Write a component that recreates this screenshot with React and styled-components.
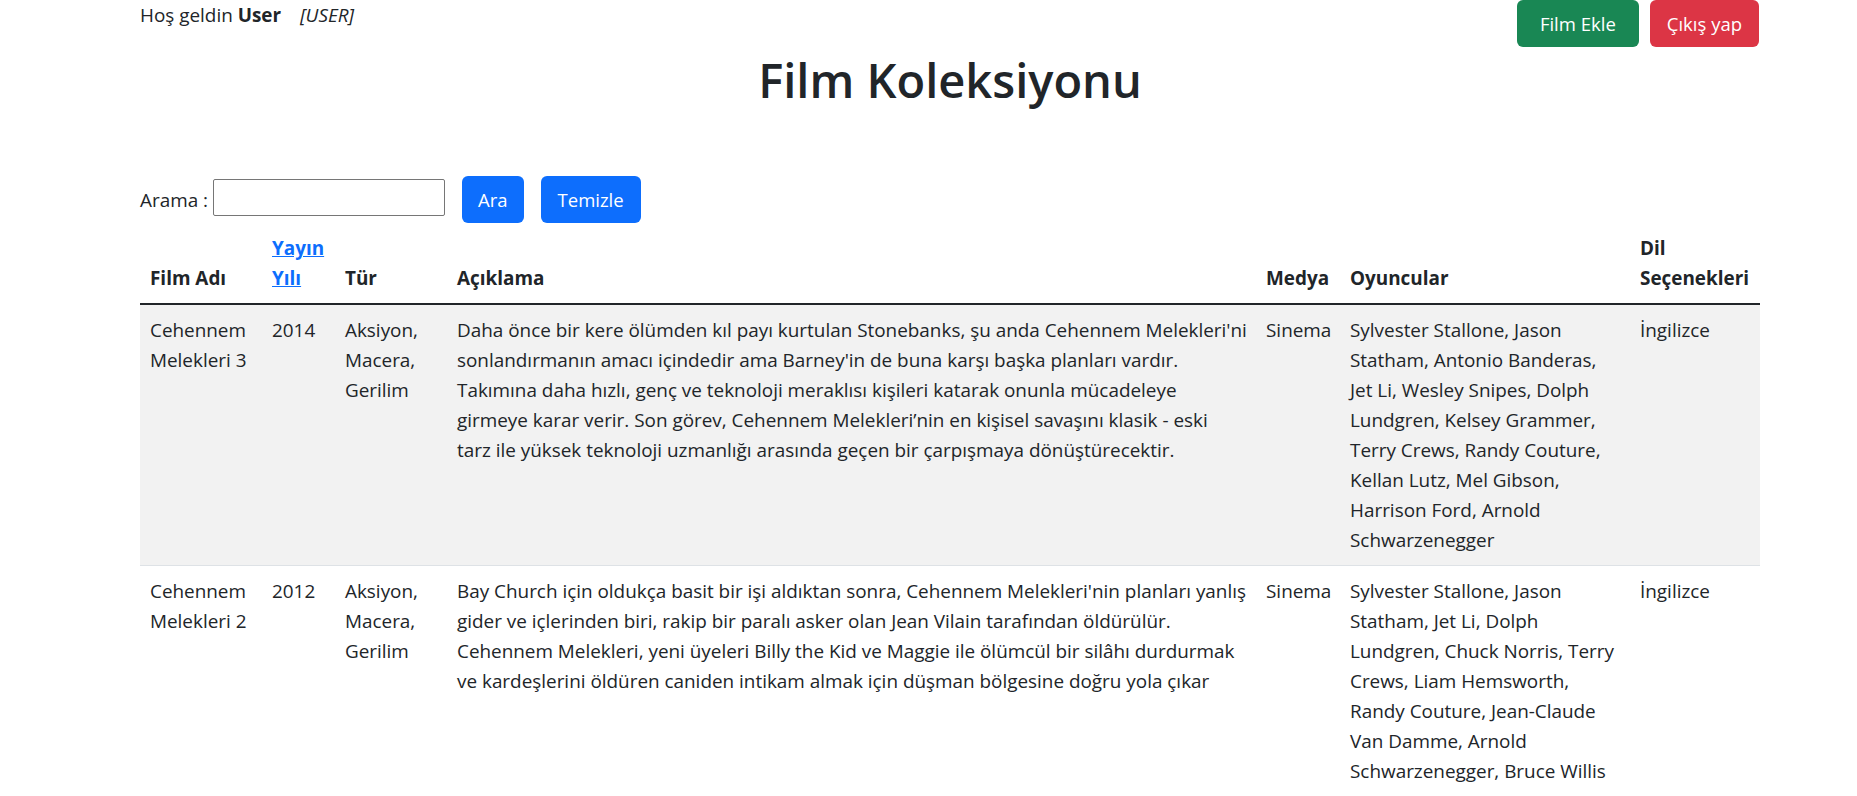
import styled, { createGlobalStyle } from "styled-components";

const GlobalStyle = createGlobalStyle`
  body {
    margin: 0;
    background: #fff;
    color: #212529;
    font-family: "Open Sans", "Noto Sans", sans-serif;
    font-size: 18.9px;
    line-height: 30px;
  }
`;

// description lines are kept as they break in the design
const films = [
  {
    name: "Cehennem Melekleri 3",
    year: "2014",
    genre: "Aksiyon, Macera, Gerilim",
    desc: [
      "Daha önce bir kere ölümden kıl payı kurtulan Stonebanks, şu anda Cehennem Melekleri'ni",
      "sonlandırmanın amacı içindedir ama Barney'in de buna karşı başka planları vardır.",
      "Takımına daha hızlı, genç ve teknoloji meraklısı kişileri katarak onunla mücadeleye",
      "girmeye karar verir. Son görev, Cehennem Melekleri’nin en kişisel savaşını klasik - eski",
      "tarz ile yüksek teknoloji uzmanlığı arasında geçen bir çarpışmaya dönüştürecektir.",
    ],
    media: "Sinema",
    cast: "Sylvester Stallone, Jason Statham, Antonio Banderas, Jet Li, Wesley Snipes, Dolph Lundgren, Kelsey Grammer, Terry Crews, Randy Couture, Kellan Lutz, Mel Gibson, Harrison Ford, Arnold Schwarzenegger",
    lang: "İngilizce",
  },
  {
    name: "Cehennem Melekleri 2",
    year: "2012",
    genre: "Aksiyon, Macera, Gerilim",
    desc: [
      "Bay Church için oldukça basit bir işi aldıktan sonra, Cehennem Melekleri'nin planları yanlış",
      "gider ve içlerinden biri, rakip bir paralı asker olan Jean Vilain tarafından öldürülür.",
      "Cehennem Melekleri, yeni üyeleri Billy the Kid ve Maggie ile ölümcül bir silâhı durdurmak",
      "ve kardeşlerini öldüren caniden intikam almak için düşman bölgesine doğru yola çıkar",
    ],
    media: "Sinema",
    cast: "Sylvester Stallone, Jason Statham, Jet Li, Dolph Lundgren, Chuck Norris, Terry Crews, Liam Hemsworth, Randy Couture, Jean-Claude Van Damme, Arnold Schwarzenegger, Bruce Willis",
    lang: "İngilizce",
  },
];

const columns = [122, 73, 112, 809, 84, 290, 130];

const App = () => {
  return (
    <Container>
      <GlobalStyle />
      <TopBar>
        <Welcome>
          Hoş geldin <b>User</b>
          <Role>[USER]</Role>
        </Welcome>
        <Actions>
          <Button $color="#198754" $pad="23px">Film Ekle</Button>
          <Button $color="#dc3545" $pad="17px">Çıkış yap</Button>
        </Actions>
      </TopBar>
      <Title>Film Koleksiyonu</Title>
      <SearchRow>
        <label>
          Arama : <SearchInput type="text" />
        </label>
        <Button $color="#0d6efd" $pad="16px">Ara</Button>
        <Button $color="#0d6efd" $pad="17px">Temizle</Button>
      </SearchRow>
      <Table>
        <colgroup>
          {columns.map((w, i) => (
            <col key={i} style={{ width: w }} />
          ))}
        </colgroup>
        <thead>
          <tr>
            <th>Film Adı</th>
            <th>
              <SortLink href="#">Yayın Yılı</SortLink>
            </th>
            <th>Tür</th>
            <th>Açıklama</th>
            <th>Medya</th>
            <th>Oyuncular</th>
            <th>Dil Seçenekleri</th>
          </tr>
        </thead>
        <tbody>
          {films.map((f, i) => (
            <Row key={i} $striped={i % 2 === 0}>
              <td>{f.name}</td>
              <td>{f.year}</td>
              <td>{f.genre}</td>
              <td>
                {f.desc.map((line, j) => (
                  <DescLine key={j}>{line}</DescLine>
                ))}
              </td>
              <td>{f.media}</td>
              <td>{f.cast}</td>
              <td>{f.lang}</td>
            </Row>
          ))}
        </tbody>
      </Table>
    </Container>
  );
};

export default App;

const Container = styled.div`
  width: 1620px;
  margin-left: 140px;
`;

const TopBar = styled.div`
  display: flex;
  justify-content: space-between;
  align-items: flex-start;
  height: 47px;
`;

const Welcome = styled.div`
  line-height: 30px;
  b {
    font-weight: 700;
  }
`;

const Role = styled.i`
  margin-left: 19px;
`;

const Actions = styled.div`
  display: flex;
  gap: 11px;
  padding-right: 1px;
`;

const Button = styled.button`
  height: 47px;
  padding: 0 ${(p) => p.$pad};
  border: none;
  border-radius: 6px;
  background: ${(p) => p.$color};
  color: #fff;
  font-family: inherit;
  font-size: 18.5px;
  cursor: pointer;
`;

const Title = styled.h1`
  margin: 3px 0 0;
  text-align: center;
  font-size: 47px;
  font-weight: 600;
  line-height: 60px;
`;

const SearchRow = styled.div`
  display: flex;
  align-items: center;
  gap: 17px;
  margin-top: 66px;
  label {
    display: flex;
    align-items: center;
    gap: 5px;
  }
`;

const SearchInput = styled.input`
  width: 232px;
  height: 37px;
  box-sizing: border-box;
  margin-top: -4px;
  border: 1px solid #767676;
  border-radius: 2px;
  font-family: inherit;
  font-size: 18px;
`;

const Table = styled.table`
  width: 1620px;
  table-layout: fixed;
  border-collapse: collapse;
  th,
  td {
    padding: 10px;
    text-align: left;
  }
  thead th {
    vertical-align: bottom;
    font-weight: 700;
    border-bottom: 2px solid #212529;
  }
  tbody td {
    vertical-align: top;
    border-bottom: 1px solid #dee2e6;
  }
`;

const Row = styled.tr`
  background: ${(p) => (p.$striped ? "#f2f2f2" : "#fff")};
`;

const DescLine = styled.span`
  display: block;
  white-space: nowrap;
`;

const SortLink = styled.a`
  color: #0d6efd;
  text-decoration: underline;
`;
